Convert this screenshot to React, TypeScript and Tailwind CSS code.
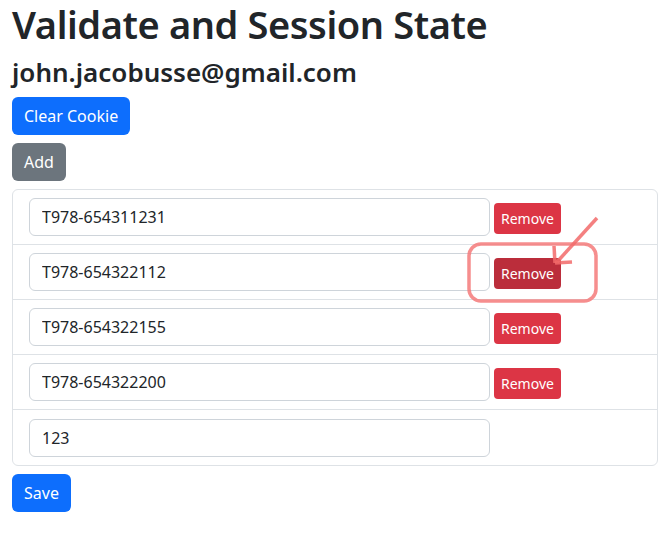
import React from 'react';

const items = ['T978-654311231', 'T978-654322112', 'T978-654322155', 'T978-654322200'];

export default function App() {
  return (
    <div className="relative px-3 text-[#212529]" style={{ fontFamily: '"Noto Sans", "Open Sans", sans-serif' }}>
      <h1 className="text-[38px] font-semibold leading-[48px] mb-2 tracking-[-0.4px]">Validate and Session State</h1>
      <h3 className="text-[26px] font-semibold leading-[33px] mb-2">john.jacobusse@gmail.com</h3>
      <div className="flex flex-col items-start gap-2">
        <button className="h-[38px] px-3 rounded-md bg-[#0d6efd] text-white text-base">Clear Cookie</button>
        <button className="h-[38px] px-3 rounded-md bg-[#6c757d] text-white text-base">Add</button>
      </div>
      <ul className="mt-2 border border-[#dee2e6] rounded-md">
        {items.map((v, i) => (
          <li key={v} className="flex items-center h-[55px] px-4 border-b border-[#dee2e6]">
            <input
              readOnly
              value={v}
              className="w-[461px] h-[38px] px-3 border border-[#ced4da] rounded-md text-base text-[#212529] outline-none"
            />
            <button
              className={`ml-1 mt-0.5 h-[31px] px-[7px] rounded text-[14px] text-white ${i === 1 ? 'bg-[#bb2d3b]' : 'bg-[#dc3545]'}`}
            >
              Remove
            </button>
          </li>
        ))}
        <li className="flex items-center h-[55px] px-4">
          <input
            readOnly
            value="123"
            className="w-[461px] h-[38px] px-3 border border-[#ced4da] rounded-md text-base text-[#212529] outline-none"
          />
        </li>
      </ul>
      <button className="mt-2 h-[38px] px-3 rounded-md bg-[#0d6efd] text-white text-base">Save</button>

      {/* annotation */}
      <svg className="absolute left-0 top-0 pointer-events-none" width="670" height="540">
        <rect x="469" y="244" width="127" height="57" rx="12" fill="none" stroke="#f47a7a" strokeOpacity="0.85" strokeWidth="3.5" />
        <g stroke="#f26a6a" strokeOpacity="0.85" strokeWidth="3.5" fill="none">
          <line x1="597" y1="218" x2="557" y2="262" />
          <line x1="554" y1="246" x2="555" y2="263" />
          <line x1="555" y1="263" x2="572" y2="262" />
        </g>
      </svg>
    </div>
  );
}
